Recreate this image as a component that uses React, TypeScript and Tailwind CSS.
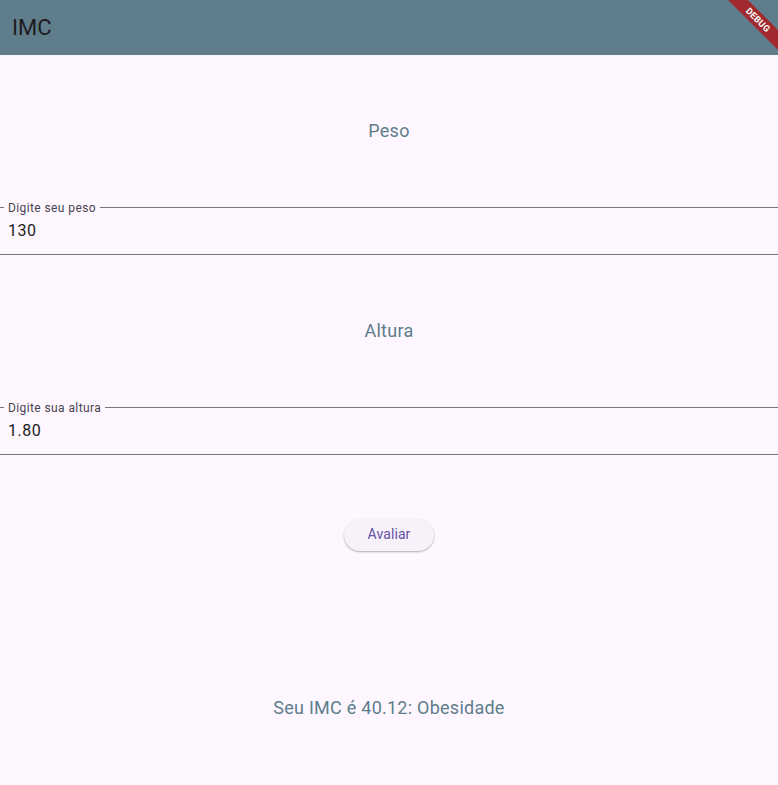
import React from "react";

function Field({ label, value }: { label: string; value: string }) {
  return (
    <div className="relative h-[48px] shrink-0 border-t border-b border-[#79747e]">
      <div className="absolute left-[4px] top-[-8px] bg-[#fef7ff] px-[4px] text-[12px] leading-[16px] tracking-[0.4px] text-[#49454f]">
        {label}
      </div>
      <div className="pl-[8px] pt-[12px] text-[16px] leading-[22px] text-[#1d1b20] tracking-[0.5px]">
        {value}
      </div>
    </div>
  );
}

export default function App() {
  return (
    <div
      className="w-[778px] h-[785px] bg-[#fef7ff] overflow-hidden relative flex flex-col"
      style={{ fontFamily: "Roboto, 'Noto Sans', sans-serif" }}
    >
      <div className="h-[55px] bg-[#607d8b] flex items-center pl-[12px] shrink-0">
        <span className="text-[22px] leading-[28px] text-[#1d1b20]">IMC</span>
      </div>
      <div className="absolute top-0 right-0 w-[60px] h-[60px] overflow-hidden pointer-events-none">
        <div className="absolute top-[13px] right-[-22px] w-[84px] h-[14px] bg-[#a02a2f] rotate-45 flex items-center justify-center">
          <span className="text-white text-[9px] font-bold leading-none tracking-[0.3px]">DEBUG</span>
        </div>
      </div>
      <div className="h-[152px] shrink-0 flex items-center justify-center pb-[2px] text-[18px] tracking-[0.25px] text-[#607d8b]">Peso</div>
      <Field label="Digite seu peso" value="130" />
      <div className="h-[152px] shrink-0 flex items-center justify-center pb-[2px] text-[18px] tracking-[0.25px] text-[#607d8b]">Altura</div>
      <Field label="Digite sua altura" value="1.80" />
      <div className="h-[159px] shrink-0 flex items-center justify-center">
        <button className="h-[32px] px-[24px] rounded-full bg-[#f7f2fa] text-[#6750a4] text-[14px] tracking-[0.1px] shadow-[0_1px_2px_rgba(0,0,0,0.3)]">
          Avaliar
        </button>
      </div>
      <div className="h-[186px] shrink-0 flex items-center justify-center text-[18px] tracking-[0.25px] text-[#607d8b]">
        Seu IMC é 40.12: Obesidade
      </div>
    </div>
  );
}
